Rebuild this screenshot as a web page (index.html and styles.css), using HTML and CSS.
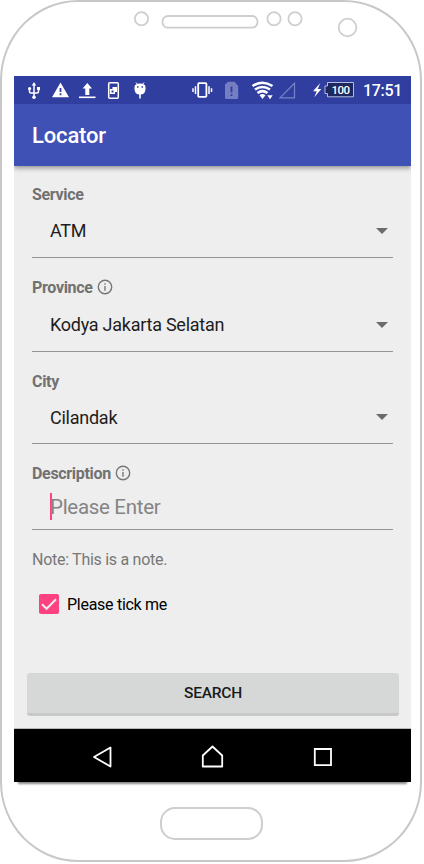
FILE: index.html
```html
<!DOCTYPE html>
<html lang="en">
<head>
<meta charset="utf-8">
<title>Locator</title>
<link rel="stylesheet" href="styles.css">
</head>
<body>
<div class="phone">
  <svg class="bezel-top" width="418" height="74" viewBox="2 2 418 74">
    <g fill="none" stroke="#cecece" stroke-width="1.800">
      <circle cx="141.500" cy="18.700" r="6.600"/>
      <rect x="162.500" y="16" width="95" height="11.700" rx="5.500"/>
      <circle cx="274" cy="18.700" r="6.600"/>
      <circle cx="295" cy="18.700" r="6.600"/>
      <circle cx="347.500" cy="27.500" r="8.800"/>
    </g>
  </svg>
  <main class="screen">
    <div class="status">
      <svg class="status-icons" width="345" height="28" viewBox="14 76 345 28">
        <g fill="none" stroke="#fff" stroke-width="1.500">
          <path d="M34 84V97M29.500 88.500V91.500Q29.500 93 31 93H37Q38.500 93 38.500 91.500V88.500"/>
          <path d="M79 97.300H95.500" stroke-width="1.600"/>
          <rect x="108.700" y="82.800" width="9.600" height="15.400" rx="1"/>
          <rect x="198.200" y="83.200" width="8.200" height="13.600" rx=".8" stroke-width="1.800"/>
          <path d="M195.500 86.200V94M193 88.200V92M209 86.200V94M211.500 88.200V92"/>
        </g>
        <g fill="#fff">
          <path d="M34 82L36.200 85.500H31.800Z"/><circle cx="34" cy="97.200" r="1.800"/><circle cx="29.600" cy="88.500" r="1.600"/><path d="M37 87H40V90H37Z"/>
          <path d="M60.500 82.500L69 97.300H52ZM59.600 88V92H61.400V88ZM59.600 93.300V95.200H61.400V93.300Z" fill-rule="evenodd"/>
          <path d="M87.300 83L92 88.500H89.300V95H85.300V88.500H82.600Z"/>
          <path d="M112.500 87H117V92H115V94H110V89H112.500ZM111.500 90.500V92.500H113.500V90.500Z" fill-rule="evenodd"/>
          <path d="M134.500 87Q134.500 83.500 140 83.500T145.500 87V89Q145.500 94.500 140 94.500T134.500 89ZM137 86.200V87.800H138.500V86.200ZM141.500 86.200V87.800H143V86.200Z" fill-rule="evenodd"/>
          <path d="M139.200 94H140.800V98.500H139.200Z"/>
          <path d="M320.300 83L313 91.200H316.700L314.300 97.300L321.300 89H317.700Z"/>
          <path d="M267.300 95.300H272.700L270 99.300Z"/>
        </g>
        <path d="M136 82.500L138 85M144 82.500L142 85" stroke="#fff"/>
        <path d="M228 81.800H234.500L238.200 86V97.500Q238.200 99 236.800 99H226.500Q225 99 225 97.500V84.500Z" fill="#757ec2"/>
        <path d="M231.500 86.500V92.500M231.500 94.200V96" stroke="#303f9f" stroke-width="1.800"/>
        <path d="M252.500 86Q262.500 79.300 272.500 86M255 89.600Q262.500 84.300 270 89.600M257.500 93Q262.500 89.300 267.500 93" fill="none" stroke="#fff" stroke-width="2.500"/>
        <path d="M259.500 95.200Q262.500 93 265.500 95.200L262.500 99Z" fill="#fff"/>
        <path d="M280 97.800H294.500V83.300Z" fill="none" stroke="#7982c5" stroke-width="1.200"/>
        <path d="M327.500 82.500H353.500V96.800H327.500V93.500H325V86H327.500Z" fill="#1d2861" stroke="#b6bbdd"/>
        <text class="battery" x="331.500" y="94" textLength="18.500">100</text>
      </svg>
      <span class="clock">17:51</span>
    </div>
    <header class="appbar"><h1>Locator</h1></header>
    <form class="form">
      <section class="field">
        <div class="label">Service</div>
        <div class="value"><span>ATM</span><i class="arrow"></i></div>
      </section>
      <section class="field province">
        <div class="label">Province <svg class="info" viewBox="0 0 16 16"><circle cx="8" cy="8" r="6.700"/><path d="M8 7V11.800M8 4.200V5.800"/></svg></div>
        <div class="value"><span>Kodya Jakarta Selatan</span><i class="arrow"></i></div>
      </section>
      <section class="field city">
        <div class="label">City</div>
        <div class="value"><span>Cilandak</span><i class="arrow"></i></div>
      </section>
      <section class="field description">
        <div class="label">Description <svg class="info" viewBox="0 0 16 16"><circle cx="8" cy="8" r="6.700"/><path d="M8 7V11.800M8 4.200V5.800"/></svg></div>
        <div class="value entry"><i class="caret"></i><span>Please Enter</span></div>
      </section>
      <p class="note">Note: This is a note.</p>
      <div class="check">
        <svg width="20" height="20" viewBox="0 0 20 20"><rect width="20" height="20" rx="2" fill="#ff4081"/><path d="M3 10.300L7.600 14.800L17 5.200" fill="none" stroke="#eee" stroke-width="2"/></svg>
        <span>Please tick me</span>
      </div>
      <button class="search" type="button">SEARCH</button>
    </form>
    <nav class="nav">
      <svg width="397" height="53" viewBox="14 729 397 53">
        <g fill="none" stroke="#fff" stroke-width="1.800" stroke-linejoin="round">
          <path d="M110.500 747.500V766.500L94 757Z"/>
          <path d="M202.800 766.500V755.500L212.500 746.500L222.200 755.500V766.500Z"/>
          <path d="M314.800 749H331V765.200H314.800Z" stroke-linejoin="miter"/>
        </g>
      </svg>
    </nav>
  </main>
  <div class="home-button"></div>
</div>
</body>
</html>
```
FILE: styles.css
```css
* { box-sizing: border-box; }
body { margin: 0; background: #fff; font-family: Roboto, sans-serif; }
svg { display: block; }
.phone {
  width: 422px; height: 862px;
  border: 2px solid #c8c8c8;
  border-radius: 78px / 80px;
  background: #fff;
}
.screen {
  width: 397px; height: 706px; margin-left: 12px;
  display: flex; flex-direction: column;
  background: #eee;
  box-shadow: 0 6px 2px -4px #888;
}
.status {
  height: 28px; flex: none; display: flex; align-items: center;
  background: #303f9f; color: #fff;
}
.battery { font: 500 11.500px Roboto, sans-serif; fill: #fff; }
.clock { margin-left: 4px; font-size: 16px; font-weight: 500; line-height: 28px; padding-top: 1px; letter-spacing: -.3px; }
.appbar {
  height: 62px; flex: none; padding-left: 18px;
  background: #3f51b5; color: #fff;
  box-shadow: 0 2px 5px rgba(0, 0, 0, .4);
  clip-path: inset(0 0 -10px 0);
}
h1 { margin: 0; font-size: 22px; font-weight: 500; line-height: 63px; letter-spacing: -.15px; }
.form { height: 563px; padding: 18px 18px 0; border-bottom: 1px solid #b8b8b8; }
.field { height: 74px; border-bottom: 1px solid #949494; }
.province { height: 75px; margin-top: 19px; }
.city { height: 73px; margin-top: 19px; }
.description { height: 67px; margin-top: 19px; }
.label {
  display: flex; align-items: center; gap: 4px; height: 20px;
  font-size: 16px; font-weight: 700; color: #717171; letter-spacing: -.32px;
}
.info { width: 16px; height: 16px; fill: none; stroke: #777; stroke-width: 1.400; }
.value {
  display: flex; align-items: center; justify-content: space-between;
  height: 53px; padding: 0 5px 0 18px;
  font-size: 18px; color: #1d1d1d; letter-spacing: -.25px;
}
.arrow { border: 6px solid transparent; border-top-color: #6b6b6b; border-bottom: 0; }
.province .value { height: 55px; }
.city .value { height: 52px; }
.value.entry { height: 47px; justify-content: flex-start; font-size: 20.500px; color: #848484; letter-spacing: -.3px; }
.caret { width: 2px; height: 27px; margin-right: -2px; background: #ff4081; }
.note { margin: 19px 0 0; font-size: 16px; line-height: 21px; color: #777; letter-spacing: -.28px; }
.check {
  display: flex; align-items: center; gap: 8px;
  height: 20px; margin: 24px 0 0 7px;
  font-size: 16px; color: #000; letter-spacing: -.28px;
}
.search {
  display: block; width: 372px; height: 43px; margin: 59px 0 0 -5px; padding: 0;
  border: 0; border-bottom: 3px solid #c7c8c8; border-radius: 3px;
  background: #d6d8d7; color: #1a1a1a;
  font: 500 15.500px Roboto, sans-serif; letter-spacing: -.2px;
}
.nav { height: 53px; flex: none; background: #000; }
.home-button {
  width: 103px; height: 33px; margin: 25px 0 0 158px;
  border: 2px solid #cecece; border-radius: 15px;
}
```
